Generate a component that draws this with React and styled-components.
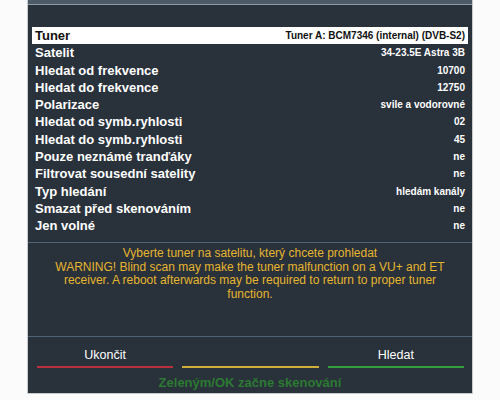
import React from 'react'
import styled, { createGlobalStyle } from 'styled-components'

const Global = createGlobalStyle`
  html, body {
    margin: 0;
    padding: 0;
    background: #ffffff;
  }
  body {
    font-family: "Liberation Sans", Arial, sans-serif;
  }
`

const Screen = styled.div`
  width: 500px;
  height: 400px;
  background: #fbfbfb;
  display: flex;
  justify-content: center;
  align-items: flex-start;
`

const Panel = styled.div`
  width: 446px;
  height: 394px;
  box-sizing: border-box;
  background: #29313b;
  border: 1px solid #c8cbce;
  border-top: none;
  display: flex;
  flex-direction: column;
`

const TitleBand = styled.div`
  height: 4px;
  background: #4d5a68;
  border-bottom: 1px solid #8f9ba6;
  margin-bottom: 22px;
`

const List = styled.div`
  display: flex;
  flex-direction: column;
  padding: 0 4px;
`

const Row = styled.div`
  height: 17.27px;
  display: flex;
  align-items: center;
  justify-content: space-between;
  padding: 0 3px;
  background: ${({ selected }) => (selected ? '#ffffff' : 'transparent')};
  color: ${({ selected }) => (selected ? '#111111' : '#ffffff')};
`

const Label = styled.span`
  font-size: 13px;
  font-weight: bold;
  white-space: nowrap;
`

const Value = styled.span`
  font-size: 10px;
  font-weight: bold;
  white-space: nowrap;
`

const Divider = styled.div`
  height: 1px;
  background: #4f6474;
  margin-top: ${({ top }) => top}px;
`

const Message = styled.div`
  padding: 4px 24px 0;
  color: #e6b52e;
  font-size: 12px;
  line-height: 13.6px;
  text-align: center;
`

const Spacer = styled.div`
  flex: 1;
`

const Buttons = styled.div`
  display: grid;
  grid-template-columns: repeat(3, 1fr);
  column-gap: 9px;
  padding: 11px 8px 0 9px;
`

const Button = styled.div`
  display: flex;
  flex-direction: column;
  align-items: center;
  justify-content: space-between;
  height: 20px;
  color: #ffffff;
  font-size: 12.5px;
  line-height: 14px;
`

const ButtonLine = styled.div`
  align-self: stretch;
  height: 2px;
  background: ${({ color }) => color};
`

const Hint = styled.div`
  text-align: center;
  color: #2c7a32;
  font-size: 13px;
  line-height: 15px;
  font-weight: bold;
  margin-top: 7px;
  margin-bottom: 3px;
`

const rows = [
  ['Tuner', 'Tuner A: BCM7346 (internal) (DVB-S2)'],
  ['Satelit', '34-23.5E Astra 3B'],
  ['Hledat od frekvence', '10700'],
  ['Hledat do frekvence', '12750'],
  ['Polarizace', 'svile a vodorovné'],
  ['Hledat od symb.ryhlosti', '02'],
  ['Hledat do symb.ryhlosti', '45'],
  ['Pouze neznámé tranďáky', 'ne'],
  ['Filtrovat sousední satelity', 'ne'],
  ['Typ hledání', 'hledám kanály'],
  ['Smazat před skenováním', 'ne'],
  ['Jen volné', 'ne'],
]

export default function App() {
  return (
    <>
      <Global />
      <Screen>
        <Panel>
          <TitleBand />
          <List>
            {rows.map(([label, value], i) => (
              <Row key={label} selected={i === 0}>
                <Label>{label}</Label>
                <Value>{value}</Value>
              </Row>
            ))}
          </List>
          <Divider top={8} />
          <Message>
            Vyberte tuner na satelitu, který chcete prohledat
            <br />
            WARNING! Blind scan may make the tuner malfunction on a VU+ and ET
            receiver. A reboot afterwards may be required to return to proper tuner
            function.
          </Message>
          <Spacer />
          <Divider top={0} />
          <Buttons>
            <Button>
              Ukončit
              <ButtonLine color="#b8303c" />
            </Button>
            <Button>
              <span>&nbsp;</span>
              <ButtonLine color="#cfae3a" />
            </Button>
            <Button>
              Hledat
              <ButtonLine color="#35a040" />
            </Button>
          </Buttons>
          <Hint>Zeleným/OK začne skenování</Hint>
        </Panel>
      </Screen>
    </>
  )
}
